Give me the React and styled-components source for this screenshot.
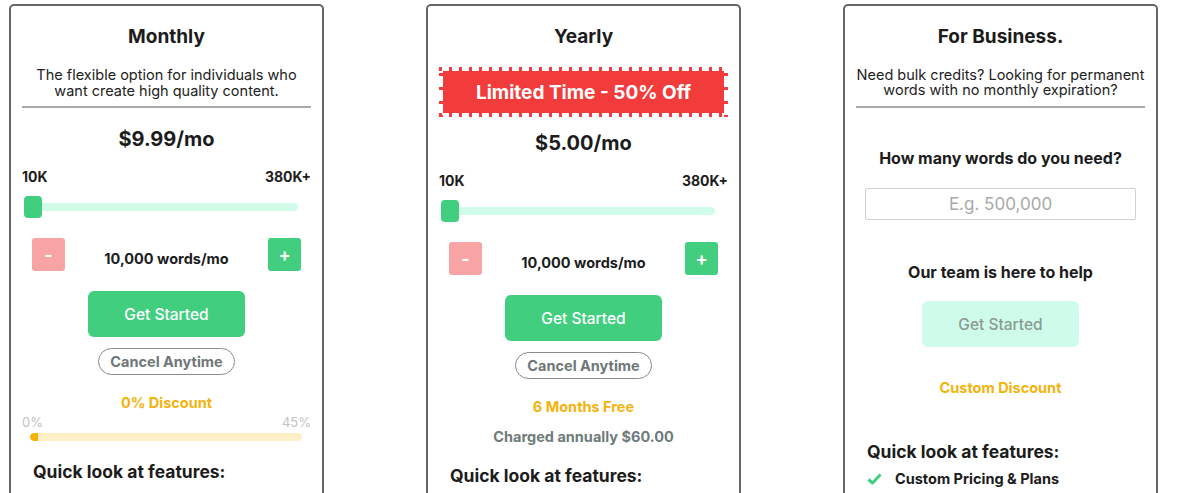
import styled, { createGlobalStyle } from 'styled-components';

const GlobalStyle = createGlobalStyle`
  html, body {
    margin: 0;
    padding: 0;
    overflow: hidden;
    background: #ffffff;
    font-family: Inter, "Noto Sans", "Liberation Sans", sans-serif;
    color: #1c1c1c;
  }
`;

const GREEN = '#41cf7f';
const MINT = '#d1fcea';
const ORANGE = '#f4b30b';
const RED = '#f13c3b';

const Page = styled.div`
  display: flex;
  align-items: flex-start;
  gap: 102px;
  padding: 4px 0 0 9px;
`;

const Card = styled.div`
  width: 315px;
  height: 560px;
  box-sizing: border-box;
  border: 2px solid #666;
  border-radius: 5px;
  padding: 19px 11px 0;
  display: flex;
  flex-direction: column;
`;

const Title = styled.h2`
  margin: 0;
  font-size: 19px;
  line-height: 24px;
  font-weight: 700;
  text-align: center;
`;

const Desc = styled.p`
  margin: 18px 0 0;
  font-size: 14.5px;
  line-height: ${(p) => p.$lh || 16}px;
  text-align: center;
  color: #222;
`;

const Divider = styled.hr`
  margin: ${(p) => p.$mt || 7}px 0 0;
  border: none;
  border-top: 2px solid #aaa;
`;

const Badge = styled.div`
  margin-top: 18px;
  height: 50px;
  box-sizing: border-box;
  padding: 4px;
  background:
    repeating-linear-gradient(to right, ${RED} 0 3px, transparent 3px 10px) left top / 100% 4px no-repeat,
    repeating-linear-gradient(to right, ${RED} 0 3px, transparent 3px 10px) left bottom / 100% 4px no-repeat,
    repeating-linear-gradient(to bottom, transparent 0 6px, ${RED} 6px 9px, transparent 9px 14px) left top / 4px 100% no-repeat,
    repeating-linear-gradient(to bottom, transparent 0 6px, ${RED} 6px 9px, transparent 9px 14px) right top / 4px 100% no-repeat;
`;

const BadgeBody = styled.div`
  height: 100%;
  background: ${RED};
  color: #fff;
  font-size: 19px;
  font-weight: 700;
  display: flex;
  align-items: center;
  justify-content: center;
`;

const Price = styled.div`
  margin-top: ${(p) => p.$mt}px;
  font-size: 20px;
  line-height: 24px;
  font-weight: 700;
  text-align: center;
`;

const RangeLabels = styled.div`
  margin-top: 17px;
  display: flex;
  justify-content: space-between;
  font-size: 14px;
  line-height: 18px;
  font-weight: 700;
`;

const Slider = styled.div`
  position: relative;
  margin: 10px 13px 0 2px;
  height: 22px;
  display: flex;
  align-items: center;
`;

const Track = styled.div`
  flex: 1;
  height: 8px;
  border-radius: 4px;
  background: ${MINT};
`;

const Thumb = styled.div`
  position: absolute;
  left: 0;
  top: 0;
  width: 18px;
  height: 22px;
  border-radius: 4px;
  background: ${GREEN};
`;

const Stepper = styled.div`
  margin: 20px 10px 0;
  display: flex;
  align-items: center;
  justify-content: space-between;
`;

const StepButton = styled.button`
  width: 33px;
  height: 33px;
  border: none;
  border-radius: 3px;
  padding: 0;
  background: ${(p) => (p.$minus ? '#f8a4a4' : GREEN)};
  color: #fff;
  font-family: inherit;
  font-size: 18px;
  font-weight: 700;
  display: flex;
  align-items: center;
  justify-content: center;
`;

const Words = styled.span`
  font-size: 14.5px;
  font-weight: 700;
  padding-top: 7px;
`;

const StartButton = styled.button`
  align-self: center;
  margin-top: ${(p) => p.$mt || 20}px;
  width: 157px;
  height: 46px;
  border: none;
  border-radius: 6px;
  background: ${(p) => (p.$disabled ? '#cffcea' : GREEN)};
  color: ${(p) => (p.$disabled ? '#8a9a92' : '#fff')};
  font-family: inherit;
  font-size: 15.5px;
  font-weight: 500;
`;

const Pill = styled.div`
  align-self: center;
  margin-top: 11px;
  box-sizing: border-box;
  height: 27px;
  padding: 0 11px;
  border: 1px solid #8a8a8a;
  border-radius: 14px;
  display: flex;
  align-items: center;
  font-size: 14.5px;
  font-weight: 700;
  color: #6f7778;
`;

const Highlight = styled.div`
  margin-top: ${(p) => p.$mt}px;
  font-size: 14.5px;
  line-height: 20px;
  font-weight: 700;
  text-align: center;
  color: ${ORANGE};
`;

const Note = styled.div`
  margin-top: 10px;
  font-size: 14.5px;
  line-height: 20px;
  font-weight: 700;
  text-align: center;
  color: #6f7b7b;
`;

const PercentLabels = styled.div`
  margin-top: 2px;
  display: flex;
  justify-content: space-between;
  font-size: 13px;
  line-height: 14px;
  color: #c2c2c2;
`;

const DiscountBar = styled.div`
  margin: 4px 9px 0 8px;
  height: 8px;
  border-radius: 4px;
  background: #fdf0c9;
  overflow: hidden;
`;

const DiscountFill = styled.div`
  height: 100%;
  background: ${ORANGE};
  border-radius: 4px 0 0 4px;
`;

const Features = styled.h3`
  margin: ${(p) => p.$mt}px 0 0 11px;
  font-size: 17.5px;
  line-height: 22px;
  font-weight: 700;
`;

const Question = styled.div`
  margin-top: ${(p) => p.$mt}px;
  font-size: 16px;
  line-height: 20px;
  font-weight: 700;
  text-align: center;
`;

const WordsInput = styled.input`
  margin: 20px 9px 0;
  height: 32px;
  box-sizing: border-box;
  border: 1px solid #cfcfcf;
  border-radius: 2px;
  font-family: inherit;
  font-size: 17px;
  text-align: center;
  color: #333;
  &::placeholder {
    color: #a9a9a9;
  }
`;

const FeatureRow = styled.div`
  margin: 7px 0 0 11px;
  display: flex;
  align-items: center;
  gap: 13px;
  font-size: 14.5px;
  line-height: 18px;
  font-weight: 700;
`;

function Check() {
  return (
    <svg width="15" height="12" viewBox="0 0 15 12">
      <path d="M1.5 6.5 L5.5 10 L13.5 1.5" fill="none" stroke={GREEN} strokeWidth="3" strokeLinejoin="round" />
    </svg>
  );
}

function WordSlider() {
  return (
    <>
      <RangeLabels>
        <span>10K</span>
        <span>380K+</span>
      </RangeLabels>
      <Slider>
        <Track />
        <Thumb />
      </Slider>
      <Stepper>
        <StepButton $minus>-</StepButton>
        <Words>10,000 words/mo</Words>
        <StepButton>+</StepButton>
      </Stepper>
      <StartButton>Get Started</StartButton>
      <Pill>Cancel Anytime</Pill>
    </>
  );
}

export default function App() {
  return (
    <>
      <GlobalStyle />
      <Page>
        <Card>
          <Title>Monthly</Title>
          <Desc>The flexible option for individuals who want create high quality content.</Desc>
          <Divider />
          <Price $mt={19}>$9.99/mo</Price>
          <WordSlider />
          <Highlight $mt={18}>0% Discount</Highlight>
          <PercentLabels>
            <span>0%</span>
            <span>45%</span>
          </PercentLabels>
          <DiscountBar>
            <DiscountFill style={{ width: 8 }} />
          </DiscountBar>
          <Features $mt={20}>Quick look at features:</Features>
        </Card>

        <Card>
          <Title>Yearly</Title>
          <Badge>
            <BadgeBody>Limited Time - 50% Off</BadgeBody>
          </Badge>
          <Price $mt={14}>$5.00/mo</Price>
          <WordSlider />
          <Highlight $mt={18}>6 Months Free</Highlight>
          <Note>Charged annually $60.00</Note>
          <Features $mt={18}>Quick look at features:</Features>
        </Card>

        <Card>
          <Title>For Business.</Title>
          <Desc $lh={15}>Need bulk credits? Looking for permanent words with no monthly expiration?</Desc>
          <Divider $mt={9} />
          <Question $mt={40}>How many words do you need?</Question>
          <WordsInput placeholder="E.g. 500,000" />
          <Question $mt={42}>Our team is here to help</Question>
          <StartButton $disabled $mt={19}>Get Started</StartButton>
          <Highlight $mt={31}>Custom Discount</Highlight>
          <Features $mt={43}>Quick look at features:</Features>
          <FeatureRow>
            <Check />
            Custom Pricing &amp; Plans
          </FeatureRow>
        </Card>
      </Page>
    </>
  );
}
